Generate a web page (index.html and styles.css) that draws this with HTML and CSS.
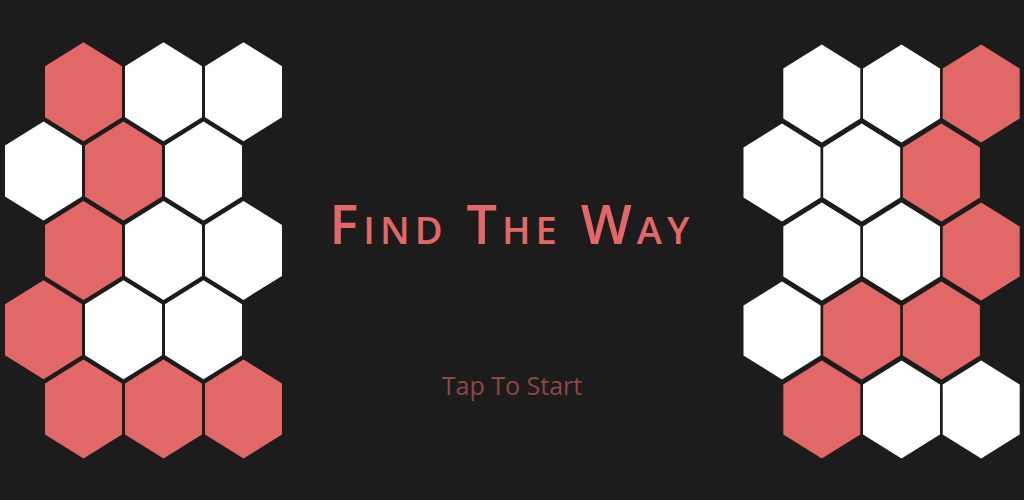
FILE: index.html
```html
<!DOCTYPE html>
<html>
<head>
<meta charset="utf-8">
<link rel="stylesheet" href="styles.css">
</head>
<body>
<div class="screen">
  <svg class="grid" width="290" height="500" viewBox="0 0 290 500">
    <defs>
      <polygon id="hex" points="0,-49.5 38.5,-25.5 38.5,25.5 0,49.5 -38.5,25.5 -38.5,-25.5"/>
    </defs>
    <use href="#hex" x="83.5" y="91.8" class="r"/>
    <use href="#hex" x="163.5" y="91.8" class="w"/>
    <use href="#hex" x="243.5" y="91.8" class="w"/>
    <use href="#hex" x="43.5" y="171.1" class="w"/>
    <use href="#hex" x="123.5" y="171.1" class="r"/>
    <use href="#hex" x="203.5" y="171.1" class="w"/>
    <use href="#hex" x="83.5" y="250.4" class="r"/>
    <use href="#hex" x="163.5" y="250.4" class="w"/>
    <use href="#hex" x="243.5" y="250.4" class="w"/>
    <use href="#hex" x="43.5" y="329.7" class="r"/>
    <use href="#hex" x="123.5" y="329.7" class="w"/>
    <use href="#hex" x="203.5" y="329.7" class="w"/>
    <use href="#hex" x="83.5" y="409" class="r"/>
    <use href="#hex" x="163.5" y="409" class="r"/>
    <use href="#hex" x="243.5" y="409" class="r"/>
  </svg>
  <div class="center">
    <h1 class="title">Find The Way</h1>
    <p class="start">Tap To Start</p>
  </div>
  <svg class="grid" width="290" height="500" viewBox="0 0 290 500">
    <defs>
      <polygon id="hex2" points="0,-49 38.5,-25 38.5,25 0,49 -38.5,25 -38.5,-25"/>
    </defs>
    <use href="#hex2" x="87.8" y="93.5" class="w"/>
    <use href="#hex2" x="167.5" y="93.5" class="w"/>
    <use href="#hex2" x="247.2" y="93.5" class="r"/>
    <use href="#hex2" x="48" y="172.5" class="w"/>
    <use href="#hex2" x="127.7" y="172.5" class="w"/>
    <use href="#hex2" x="207.4" y="172.5" class="r"/>
    <use href="#hex2" x="87.8" y="251.5" class="w"/>
    <use href="#hex2" x="167.5" y="251.5" class="w"/>
    <use href="#hex2" x="247.2" y="251.5" class="r"/>
    <use href="#hex2" x="48" y="330.5" class="w"/>
    <use href="#hex2" x="127.7" y="330.5" class="r"/>
    <use href="#hex2" x="207.4" y="330.5" class="r"/>
    <use href="#hex2" x="87.8" y="409.5" class="r"/>
    <use href="#hex2" x="167.5" y="409.5" class="w"/>
    <use href="#hex2" x="247.2" y="409.5" class="w"/>
  </svg>
</div>
</body>
</html>
```
FILE: styles.css
```css
html, body {
  margin: 0;
  padding: 0;
  background: #1c1c1c;
}

.screen {
  width: 1024px;
  height: 500px;
  display: flex;
  flex-direction: row;
  background: #1c1c1c;
  overflow: hidden;
}

.grid {
  flex: 0 0 290px;
  display: block;
}

.r { fill: #e26868; }
.w { fill: #ffffff; }

.center {
  flex: 1;
  display: flex;
  flex-direction: column;
  align-items: center;
  padding-top: 193px;
  font-family: "Open Sans", "DejaVu Sans", sans-serif;
}

.title {
  margin: 0;
  font-size: 54px;
  line-height: 60px;
  font-weight: 600;
  font-variant: small-caps;
  letter-spacing: 5px;
  color: #e26868;
  white-space: nowrap;
}

.start {
  margin: 117px 0 0 0;
  font-size: 25px;
  line-height: 30px;
  color: #8f4646;
}
```
